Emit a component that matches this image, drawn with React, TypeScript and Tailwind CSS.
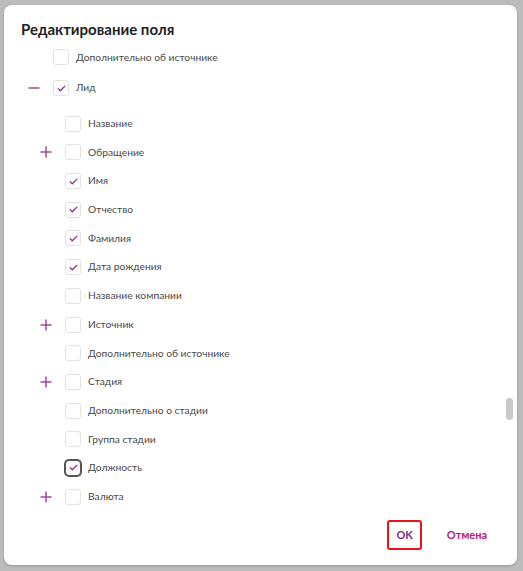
import React from 'react';

type Item = {
  label: string;
  level: 0 | 1;
  checked?: boolean;
  toggle?: 'plus' | 'minus';
  focused?: boolean;
  gap?: string;
};

const items: Item[] = [
  { label: 'Дополнительно об источнике', level: 0 },
  { label: 'Лид', level: 0, checked: true, toggle: 'minus', gap: 'mt-[2px]' },
  { label: 'Название', level: 1, gap: 'mt-[7px]' },
  { label: 'Обращение', level: 1, toggle: 'plus' },
  { label: 'Имя', level: 1, checked: true },
  { label: 'Отчество', level: 1, checked: true },
  { label: 'Фамилия', level: 1, checked: true },
  { label: 'Дата рождения', level: 1, checked: true },
  { label: 'Название компании', level: 1 },
  { label: 'Источник', level: 1, toggle: 'plus' },
  { label: 'Дополнительно об источнике', level: 1 },
  { label: 'Стадия', level: 1, toggle: 'plus' },
  { label: 'Дополнительно о стадии', level: 1 },
  { label: 'Группа стадии', level: 1 },
  { label: 'Должность', level: 1, checked: true, focused: true },
  { label: 'Валюта', level: 1, toggle: 'plus' },
];

const Toggle = ({ kind }: { kind: 'plus' | 'minus' }) => (
  <svg width="12" height="12" viewBox="0 0 12 12" className="mr-[13px]">
    <path d="M0.5 6H11.5" stroke="#9c3a96" strokeWidth="1.4" />
    {kind === 'plus' && <path d="M6 0.5V11.5" stroke="#9c3a96" strokeWidth="1.4" />}
  </svg>
);

const Checkbox = ({ checked, focused }: { checked?: boolean; focused?: boolean }) => (
  <div
    className={
      focused
        ? 'w-4 h-4 rounded-[4px] border border-[#555] shadow-[0_0_0_1px_#555] flex items-center justify-center bg-white'
        : 'w-4 h-4 rounded-[3px] border border-[#e2e2e2] flex items-center justify-center bg-white'
    }
  >
    {checked && (
      <svg width="9" height="7" viewBox="0 0 9 7">
        <path d="M0.8 3.4L3.3 5.8L8.2 0.9" fill="none" stroke="#8e2c8c" strokeWidth="1.3" />
      </svg>
    )}
  </div>
);

const Row = ({ item }: { item: Item }) => (
  <div className={`flex items-center h-[28.7px] ${item.gap ?? ''}`}>
    <div className={`${item.level === 0 ? 'w-[49px]' : 'w-[61px]'} flex justify-end shrink-0`}>
      {item.toggle && <Toggle kind={item.toggle} />}
    </div>
    <Checkbox checked={item.checked} focused={item.focused} />
    <span className="ml-[7px] text-[10.25px] text-[#4a4a4a]">{item.label}</span>
  </div>
);

export default function App() {
  return (
    <div
      className="w-[523px] h-[571px] bg-[#bcbcbc] pt-[5px] pl-[4px] overflow-hidden"
      style={{ fontFamily: 'Lato, "Noto Sans", sans-serif' }}
    >
      <div className="relative w-[513px] h-[560px] bg-white rounded-[8px] flex flex-col shadow-[0_1px_3px_rgba(0,0,0,0.2)]">
        <div className="pt-[14px] pl-[17px] text-[15px] leading-[20px] font-bold text-[#222]">
          Редактирование поля
        </div>

        <div className="flex-1 overflow-hidden mt-[4px]">
          {items.map((item, i) => (
            <Row key={i} item={item} />
          ))}
        </div>

        {/* scrollbar thumb */}
        <div className="absolute left-[502px] top-[393px] w-[7px] h-[22px] rounded-full bg-[#c9c9c9]" />

        <div className="flex justify-end gap-[15px] pr-[20px] pb-[15px]">
          <button className="h-[30px] px-[7px] rounded-[3px] border-2 border-[#e8141c] text-[11px] font-bold text-[#7d2a7f]">
            OK
          </button>
          <button className="h-[30px] px-[10px] text-[11px] font-bold text-[#b3207b]">
            Отмена
          </button>
        </div>
      </div>
    </div>
  );
}
